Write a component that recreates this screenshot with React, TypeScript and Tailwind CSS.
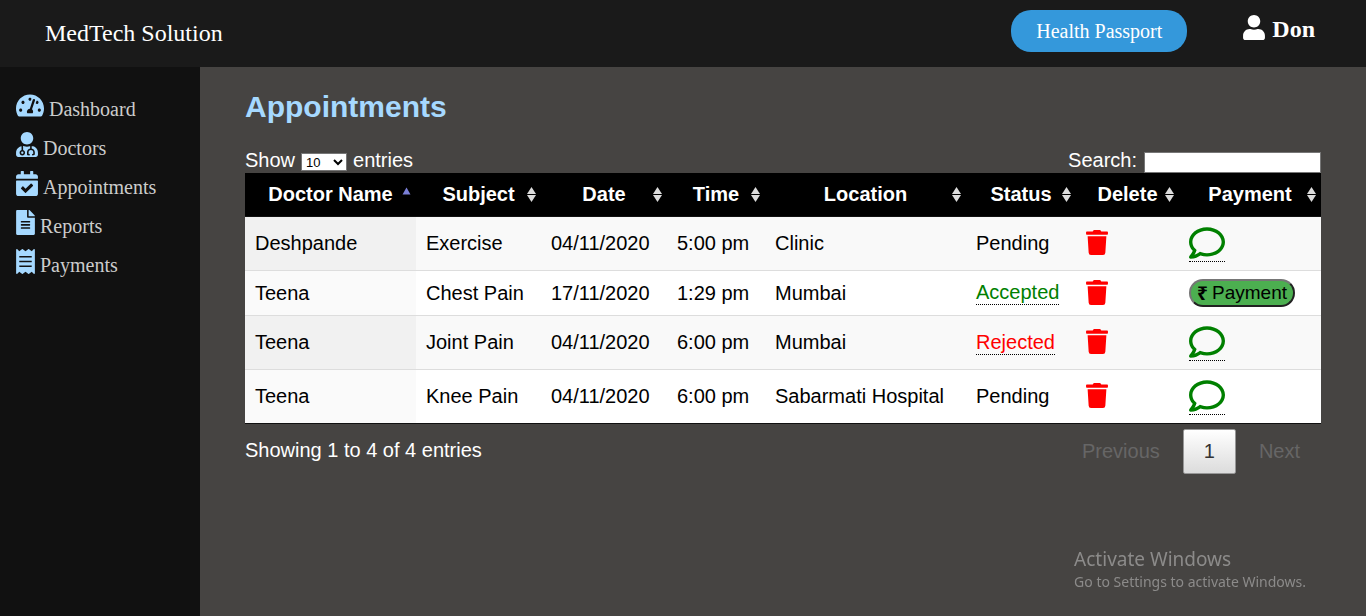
import type { ReactNode } from "react";
import {
  FaCalendarCheck,
  FaFileAlt,
  FaReceipt,
  FaRegComment,
  FaTachometerAlt,
  FaTrash,
  FaUser,
  FaUserMd,
} from "react-icons/fa";

type Status = "Pending" | "Accepted" | "Rejected";

interface Appointment {
  doctor: string;
  subject: string;
  date: string;
  time: string;
  location: string;
  status: Status;
}

const appointments: Appointment[] = [
  { doctor: "Deshpande", subject: "Exercise", date: "04/11/2020", time: "5:00 pm", location: "Clinic", status: "Pending" },
  { doctor: "Teena", subject: "Chest Pain", date: "17/11/2020", time: "1:29 pm", location: "Mumbai", status: "Accepted" },
  { doctor: "Teena", subject: "Joint Pain", date: "04/11/2020", time: "6:00 pm", location: "Mumbai", status: "Rejected" },
  { doctor: "Teena", subject: "Knee Pain", date: "04/11/2020", time: "6:00 pm", location: "Sabarmati Hospital", status: "Pending" },
];

const columns = [
  { label: "Doctor Name", width: "w-[171px]" },
  { label: "Subject", width: "w-[125px]" },
  { label: "Date", width: "w-[126px]" },
  { label: "Time", width: "w-[98px]" },
  { label: "Location", width: "w-[201px]" },
  { label: "Status", width: "w-[110px]" },
  { label: "Delete", width: "w-[103px]" },
  { label: "Payment", width: "w-[142px]" },
];

const navItems: { label: string; icon: ReactNode }[] = [
  { label: "Dashboard", icon: <FaTachometerAlt className="h-[25px] w-7" /> },
  { label: "Doctors", icon: <FaUserMd className="h-[25px] w-[22px]" /> },
  { label: "Appointments", icon: <FaCalendarCheck className="h-[25px] w-[22px]" /> },
  { label: "Reports", icon: <FaFileAlt className="h-[25px] w-[19px]" /> },
  { label: "Payments", icon: <FaReceipt className="h-[25px] w-[19px]" /> },
];

function SortIcon({ ascending }: { ascending: boolean }) {
  return (
    <svg viewBox="0 0 18 20" className="h-5 w-[18px] shrink-0" aria-hidden="true">
      {ascending ? (
        <path d="M8.5 2.5 L12.5 9.5 H4.5 Z" fill="#7a7fd6" />
      ) : (
        <g fill="#dcdcdc">
          <path d="M8.5 2 L13 9 H4 Z" />
          <path d="M8.5 17 L13 10 H4 Z" />
        </g>
      )}
    </svg>
  );
}

function StatusText({ status }: { status: Status }) {
  if (status === "Pending") return <>Pending</>;
  return (
    <a
      href="#status"
      className={
        status === "Accepted"
          ? "inline-block border-b border-dotted border-black text-[#008000]"
          : "inline-block border-b border-dotted border-black text-[#ff0000]"
      }
    >
      {status}
    </a>
  );
}

function PaymentCell({ status }: { status: Status }) {
  if (status === "Accepted") {
    return (
      <button
        type="button"
        className="flex h-7 items-center gap-1 rounded-[14px] border-2 border-t-[#767676] border-r-[#212121] border-b-[#212121] border-l-[#767676] bg-[#4caf50] px-1.5 text-[19px] leading-6 text-black"
      >
        <span className="w-[11px] font-['Noto_Sans',sans-serif] font-bold">₹</span>
        Payment
      </button>
    );
  }
  return (
    <a href="#comment" aria-label="Comment" className="block w-9 border-b border-dotted border-black text-[#008000]">
      <FaRegComment className="block size-9" />
    </a>
  );
}

export default function App() {
  return (
    <div className="flex min-h-screen flex-col bg-[#464442] font-['Liberation_Sans',Arial,sans-serif] text-xl leading-[23px]">
      <header className="flex h-[67px] items-start justify-between bg-[#1a1a1a] pl-[45px] pr-[51px] font-['Liberation_Serif','Times_New_Roman',serif] text-white">
        <a href="#home" className="pt-5 text-2xl leading-[27px]">
          MedTech Solution
        </a>
        <div className="flex items-start gap-14">
          <button type="button" className="mt-2.5 h-[42px] rounded-[20px] bg-[#3498db] px-[25px] text-xl">
            Health Passport
          </button>
          <a href="#profile" className="mt-[15px] flex items-start gap-[7px] text-2xl leading-7 font-bold">
            <FaUser className="h-[25px] w-[22px]" aria-hidden="true" />
            Don
          </a>
        </div>
      </header>

      <div className="flex flex-1">
        <nav className="w-[200px] shrink-0 bg-[#111111] px-4 pt-[26px] font-['Liberation_Serif','Times_New_Roman',serif] text-[#cccccc]">
          <ul className="flex flex-col gap-3.5">
            {navItems.map((item) => (
              <li key={item.label}>
                <a href={"#" + item.label.toLowerCase()} className="flex h-[25px] items-start gap-[5px]">
                  <span className="text-[#a6d9ff]">{item.icon}</span>
                  <span className="pt-1 leading-6">{item.label}</span>
                </a>
              </li>
            ))}
          </ul>
        </nav>

        <main className="min-w-0 flex-1 px-[45px] pt-[23px]">
          <h1 className="text-[30px] leading-[34px] font-bold text-[#a6d9ff]">Appointments</h1>

          <div className="mt-[25px] flex h-6 items-start justify-between text-white">
            <label className="flex items-start gap-1.5">
              Show
              <select
                defaultValue="10"
                className="mt-1 h-[18px] w-[46px] border border-[#767676] bg-white text-[13px] leading-4 text-black"
              >
                <option>10</option>
                <option>25</option>
                <option>50</option>
                <option>100</option>
              </select>
              entries
            </label>
            <label className="flex items-start gap-[7px]">
              Search:
              <input
                type="search"
                className="mt-[3px] h-[21px] w-[177px] border border-[#767676] bg-white px-px text-[13px] text-black"
              />
            </label>
          </div>

          <table className="w-full border-separate border-spacing-0 border-b border-[#111111] whitespace-nowrap">
            <colgroup>
              {columns.map((column) => (
                <col key={column.label} className={column.width} />
              ))}
            </colgroup>
            <thead>
              <tr className="bg-black text-white">
                {columns.map((column, index) => (
                  <th key={column.label} className="border-b border-[#111111] p-0" aria-sort={index === 0 ? "ascending" : "none"}>
                    <button type="button" className="flex w-full items-center py-2.5 pl-[18px] font-bold">
                      <span className="flex-1 text-center">{column.label}</span>
                      <SortIcon ascending={index === 0} />
                    </button>
                  </th>
                ))}
              </tr>
            </thead>
            <tbody className="text-black [&_td]:border-[#dddddd] [&_td]:px-2.5 [&_td]:py-2 [&>tr+tr>td]:border-t">
              {appointments.map((row, index) => (
                <tr key={index} className="group odd:bg-[#f9f9f9] even:bg-white">
                  <td className="group-odd:bg-[#f1f1f1] group-even:bg-[#fafafa]">{row.doctor}</td>
                  <td>{row.subject}</td>
                  <td>{row.date}</td>
                  <td>{row.time}</td>
                  <td>{row.location}</td>
                  <td>
                    <StatusText status={row.status} />
                  </td>
                  <td>
                    <button type="button" aria-label="Delete" className="block pb-0.5 text-[#ff0000]">
                      <FaTrash className="block h-[25px] w-[22px]" />
                    </button>
                  </td>
                  <td>
                    <PaymentCell status={row.status} />
                  </td>
                </tr>
              ))}
            </tbody>
          </table>

          <div className="flex items-start justify-between">
            <p className="pt-[15px] text-white">Showing 1 to 4 of 4 entries</p>
            <div className="flex gap-0.5 pt-[5px] text-[#666666]">
              <button type="button" disabled className="border border-transparent px-5 py-2.5">
                Previous
              </button>
              <button
                type="button"
                className="rounded-[2px] border border-[#979797] bg-linear-to-b from-white to-[#dcdcdc] px-5 py-2.5 text-[#333333]"
              >
                1
              </button>
              <button type="button" disabled className="border border-transparent px-5 py-2.5">
                Next
              </button>
            </div>
          </div>
        </main>
      </div>

      <div className="pointer-events-none fixed right-15 bottom-6 font-['Noto_Sans','Open_Sans',sans-serif] text-[#8c8b8a]">
        <p className="text-[19px] leading-[25px]">Activate Windows</p>
        <p className="text-sm leading-5">Go to Settings to activate Windows.</p>
      </div>
    </div>
  );
}
